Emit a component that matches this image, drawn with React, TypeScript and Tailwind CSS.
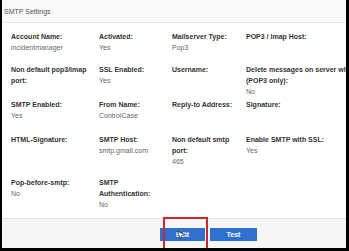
import { MousePointer2 } from 'lucide-react';

type Field = { label: React.ReactNode; value?: string };

const rows: { h: string; cells: Field[] }[] = [
  {
    h: 'h-[33px]',
    cells: [
      { label: 'Account Name:', value: 'incidentmanager' },
      { label: 'Activated:', value: 'Yes' },
      { label: 'Mailserver Type:', value: 'Pop3' },
      { label: 'POP3 / Imap Host:' },
    ],
  },
  {
    h: 'h-[35px]',
    cells: [
      { label: <>Non default pop3/imap<br />port:</> },
      { label: 'SSL Enabled:', value: 'Yes' },
      { label: 'Username:' },
      { label: <>Delete messages on server when<br />(POP3 only):</>, value: 'No' },
    ],
  },
  {
    h: 'h-[35px]',
    cells: [
      { label: 'SMTP Enabled:', value: 'Yes' },
      { label: 'From Name:', value: 'ControlCase' },
      { label: 'Reply-to Address:' },
      { label: 'Signature:' },
    ],
  },
  {
    h: 'h-[43px]',
    cells: [
      { label: 'HTML-Signature:' },
      { label: 'SMTP Host:', value: 'smtp.gmail.com' },
      { label: <>Non default smtp<br />port:</>, value: '465' },
      { label: 'Enable SMTP with SSL:', value: 'Yes' },
    ],
  },
  {
    h: 'h-[38px]',
    cells: [
      { label: 'Pop-before-smtp:', value: 'No' },
      { label: <>SMTP<br />Authentication:</>, value: 'No' },
    ],
  },
];

const colW = ['w-[88px]', 'w-[73px]', 'w-[74px]', 'w-[110px]'];

export default function App() {
  return (
    <div
      className="w-[349px] h-[251px] bg-black pl-[2px] pr-[3px] pb-[3px] overflow-hidden"
      style={{ fontFamily: '"Liberation Sans", Arial, sans-serif' }}
    >
      <div className="h-full bg-white flex flex-col overflow-hidden">
        <div className="h-[23px] shrink-0 bg-[#f9f9f9] border-b border-[#e4e4e4] flex items-center pl-[2px]">
          <span className="text-[7px] text-[#555] leading-none">SMTP Settings</span>
        </div>

        <div className="flex-1 pl-[9px] pt-[8px]">
          {rows.map((r, i) => (
            <div key={i} className={`flex ${r.h}`}>
              {r.cells.map((c, j) => (
                <div key={j} className={`${colW[j]} shrink-0 whitespace-nowrap overflow-hidden text-[7px] leading-[11px]`}>
                  <div className="font-bold text-[#333]">{c.label}</div>
                  {c.value && <div className="text-[#666]">{c.value}</div>}
                </div>
              ))}
            </div>
          ))}
        </div>

        <div className="relative h-[30px] shrink-0 bg-[#f6f6f6] border-t border-[#e2e2e2] flex items-start gap-[5px] pt-[9px] pl-[158px]">
          <button className="w-[45px] h-[13px] bg-[#2f6fce] text-white text-[7px] font-bold leading-none">
            Edit
          </button>
          <button className="w-[47px] h-[13px] bg-[#2f6fce] text-white text-[7px] font-bold leading-none">
            Test
          </button>
          <div className="absolute left-[161px] top-[-2px] w-[45px] h-[34px] border-2 border-[#c62a30]" />
          <MousePointer2
            className="absolute left-[174px] top-[11px] w-[10px] h-[10px] text-white"
            fill="white"
            stroke="black"
            strokeWidth={1.5}
          />
        </div>
      </div>
    </div>
  );
}
